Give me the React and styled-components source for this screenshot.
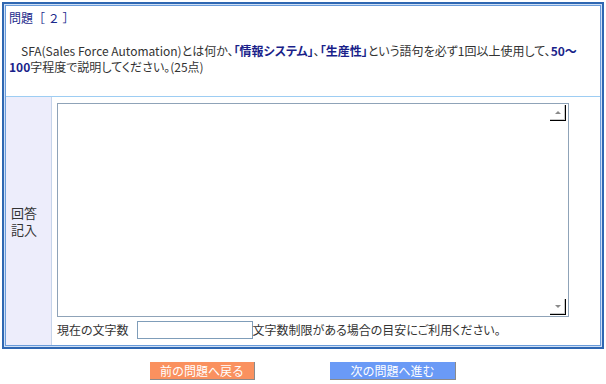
import React from 'react';
import styled, { createGlobalStyle } from 'styled-components';

/*──────── base ────────*/
const Global = createGlobalStyle`
  html, body { margin: 0; background: #fff; }
  body {
    font: 12px/16px 'Noto Sans CJK JP', 'Noto Sans', sans-serif;
    font-feature-settings: 'palt';
    color: #333;
  }
`;

/*──────── frame ────────*/
const Frame = styled.div`
  margin: 2px 0 0 2px;
  width: 602px;
  box-sizing: border-box;
  border: 2px solid #2f67b2;
  padding: 1px;
  background: #cfe0f6;
`;
const Sheet = styled.div`
  border: 1px solid #6a9bd9;
  background: #fff;
  display: grid;
  grid-template-columns: 46px 1fr;
`;

/*──────── question ────────*/
const Question = styled.div`
  grid-column: 1 / -1;
  padding: 4px 4px 21px 3px;
  border-bottom: 1px solid #9dcdf3;
`;
const Title = styled.div`
  color: #1c2a8c;
  margin-bottom: 17px;
  font-feature-settings: normal;
`;
const Body = styled.p`
  margin: 0;
  text-indent: ${p => p.$indent ? 12 : 0}px;
  white-space: nowrap;
`;
const Key = styled.b`
  color: #1a1f8a;
`;

/*──────── answer row ────────*/
const Label = styled.div`
  background: #ededfb;
  border-right: 1px solid #c6d4ea;
  display: flex;
  flex-direction: column;
  justify-content: center;
  padding-left: 5px;
  font-size: 13px;
  line-height: 17px;
`;
const Answer = styled.div`
  padding: 6px 0 6px 5px;
  display: flex;
  flex-direction: column;
  gap: 4px;
`;
const Box = styled.div`
  width: 512px;
  height: 214px;
  box-sizing: border-box;
  border: 1px solid #8fa3b8;
  display: flex;
`;
const Input = styled.textarea`
  flex: 1;
  border: 0;
  outline: none;
  resize: none;
  padding: 2px;
  font: inherit;
  overflow: hidden;
`;
const Scroll = styled.div`
  width: 17px;
  display: flex;
  flex-direction: column;
  justify-content: space-between;
  padding: 1px 1px 1px 0;
`;
const Arrow = styled.div`
  width: 16px;
  height: 16px;
  box-sizing: border-box;
  border-right: 1px solid #000;
  border-bottom: 1px solid #000;
  box-shadow: inset -1px -1px #c8c8c8;
  display: flex;
  align-items: center;
  justify-content: center;
  &::after {
    content: '';
    border-left: 3px solid transparent;
    border-right: 3px solid transparent;
    ${p => p.$down ? 'border-top: 3px solid #8a8a8a;' : 'border-bottom: 3px solid #8a8a8a;'}
  }
`;
const Count = styled.div`
  display: flex;
  align-items: center;
  height: 18px;
  white-space: nowrap;
`;
const CountBox = styled.input`
  width: 116px;
  height: 18px;
  box-sizing: border-box;
  border: 1px solid #7f9db9;
  margin: 0 0 0 8px;
  padding: 0 2px;
  font: inherit;
  outline: none;
`;

/*──────── nav buttons ────────*/
const Nav = styled.div`
  width: 606px;
  display: flex;
  justify-content: center;
  gap: 75px;
  margin-top: 13px;
`;
const NavBtn = styled.button`
  width: ${p => p.$w}px;
  height: 18px;
  padding: 0;
  border: 0;
  border-right: 1px solid #8a8a8a;
  border-bottom: 1px solid #8a8a8a;
  background: ${p => p.$bg};
  color: #fff;
  font: 12px/16px 'Noto Sans CJK JP', sans-serif;
  cursor: pointer;
`;

export default function App(){
  return (
    <>
      <Global />
      <Frame>
        <Sheet>
          <Question>
            <Title>問題［ ２ ］</Title>
            <Body $indent>
              SFA(Sales Force Automation)とは何か、<Key>「情報システム」</Key>、<Key>「生産性」</Key>という語句を必ず1回以上使用して、<Key>50～</Key>
            </Body>
            <Body>
              <Key>100</Key>字程度で説明してください。(25点)
            </Body>
          </Question>

          <Label>
            <span>回答</span>
            <span>記入</span>
          </Label>
          <Answer>
            <Box>
              <Input />
              <Scroll>
                <Arrow />
                <Arrow $down />
              </Scroll>
            </Box>
            <Count>
              現在の文字数<CountBox />文字数制限がある場合の目安にご利用ください。
            </Count>
          </Answer>
        </Sheet>
      </Frame>

      <Nav>
        <NavBtn $w={105} $bg="#fa915f">前の問題へ戻る</NavBtn>
        <NavBtn $w={126} $bg="#6a9af6">次の問題へ進む</NavBtn>
      </Nav>
    </>
  );
}
